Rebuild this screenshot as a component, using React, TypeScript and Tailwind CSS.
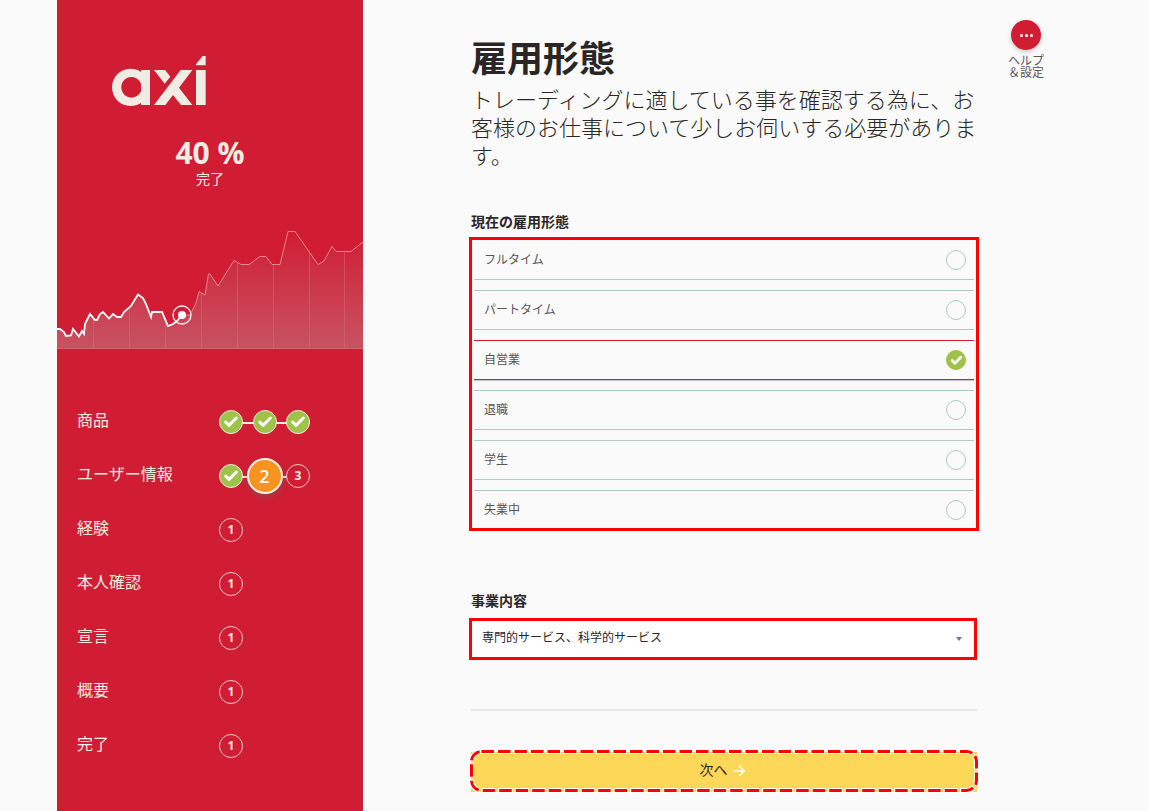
import React, { useState } from "react";
import { Check } from "lucide-react";

type StepState = "done" | "current" | "todo";

const sections: { label: string; steps: StepState[] }[] = [
  { label: "商品", steps: ["done", "done", "done"] },
  { label: "ユーザー情報", steps: ["done", "current", "todo"] },
  { label: "経験", steps: ["todo"] },
  { label: "本人確認", steps: ["todo"] },
  { label: "宣言", steps: ["todo"] },
  { label: "概要", steps: ["todo"] },
  { label: "完了", steps: ["todo"] },
];

const employmentTypes = ["フルタイム", "パートタイム", "自営業", "退職", "学生", "失業中"];

const pastLine =
  "0,109 3,109 7,112 9,116 14,115.5 16,109 22,116.5 25,111 27,114 28,104 33,94 38,100 40,100 43,94 46,92 52,98.5 56,94 60,97 64,97 67,92 74,86 81,74.5 86,78 89,84 94,97 95,92 105,92 111,106 116,104 120,101 125,95";
const futureLine =
  "125,95 133,95 139,83 142,71.5 148,75 151.5,54 153,54 161,66 177,40.5 184,44.5 192,44.5 203,36.5 209,36.5 215,44.5 223,44.5 231,11.5 238,11.5 253,33 261,44.5 267,41 275,26.5 279,31.5 294,31.5 306,22";
const gridLines = [36.5, 72.5, 108.5, 144.5, 180.5, 216.5, 252.5, 287.5];

function Logo() {
  return (
    <svg viewBox="186 48 282 150" className="h-[50px] w-[94px]" fill="#f0ebe3" role="img" aria-label="axi">
      <path
        fillRule="evenodd"
        d="M273 96V90H300V195H273V189C264 195 253 198 241 198C210 198 186 173 186 142C186 111 210 86 241 86C253 86 264 89 273 96ZM273 131C268 119 257 111 244 111C227 111 214 125 214 142C214 159 227 173 244 173C257 173 268 165 273 154Z"
      />
      <path d="M312 90H345L361 110L344 131Z" />
      <path d="M392 90H427L387 143L427 195H393L369 165L346 195H312Z" />
      <path d="M438 90H467V195H438ZM458 48H467V76H438V73Z" />
    </svg>
  );
}

function ProgressChart() {
  return (
    <svg viewBox="0 0 306 129" className="block w-full" aria-hidden="true">
      <defs>
        <linearGradient id="area" x1="0" y1="11" x2="0" y2="128" gradientUnits="userSpaceOnUse">
          <stop offset="0" stopColor="#bc9ca3" stopOpacity="0" />
          <stop offset="1" stopColor="#bc9ca3" stopOpacity="0.42" />
        </linearGradient>
        <clipPath id="under">
          <polygon points={`${pastLine} ${futureLine} 306,129 0,129`} />
        </clipPath>
      </defs>
      <polygon points={`${pastLine} ${futureLine} 306,129 0,129`} fill="url(#area)" />
      <g clipPath="url(#under)" stroke="#e0707e" strokeOpacity="0.45">
        {gridLines.map((x) => (
          <line key={x} x1={x} x2={x} y1="0" y2="129" />
        ))}
        <line x1="0" x2="306" y1="128.5" y2="128.5" />
      </g>
      <polyline points={futureLine} fill="none" stroke="#ec8e99" strokeWidth="0.9" />
      <polyline points={pastLine} fill="none" stroke="#fff" strokeWidth="1.8" />
      <circle cx="125" cy="95" r="9" fill="none" stroke="#fff" strokeWidth="1.3" />
      <circle cx="125" cy="95" r="4" fill="#fff" />
    </svg>
  );
}

function StepDot({ state, number }: { state: StepState; number: number }) {
  if (state === "done") {
    return (
      <span className="relative flex size-6 items-center justify-center rounded-full border border-[#f0ebe3] bg-[#9fc24a] text-white">
        <Check className="size-4" strokeWidth={4.5} />
      </span>
    );
  }
  if (state === "current") {
    return (
      <span className="relative flex size-9 items-center justify-center rounded-full border-2 border-[#fdf1e4] bg-[#f8931f] text-lg font-semibold text-white shadow-[0_3px_5px_rgba(110,90,100,0.6)]">
        {number}
      </span>
    );
  }
  return (
    <span className="relative flex size-6 items-center justify-center rounded-full border border-[#f0c8c8] bg-[#d01d33] text-xs font-bold text-[#f0ebe3]">
      {number}
    </span>
  );
}

function Sidebar() {
  return (
    <aside className="w-[306px] shrink-0 bg-[#d01d33] pt-14 pb-8 text-[#f0ebe3]">
      <div className="pl-[55px]">
        <Logo />
      </div>
      <p className="mt-[29px] text-center text-[30px] leading-9 font-bold">40 %</p>
      <p className="text-center text-sm leading-4">完了</p>
      <div className="mt-[33px]">
        <ProgressChart />
      </div>
      <ol className="mt-[46px] pl-5">
        {sections.map((section) => (
          <li key={section.label} className="flex h-[54px] items-center">
            <span className="w-[142px] pb-1 text-base leading-6">{section.label}</span>
            <span className="relative flex w-[91px] items-center justify-between">
              {section.steps.length > 1 && (
                <span className="absolute top-1/2 right-0 left-3 h-[2px] bg-[#f0ebe3]" />
              )}
              {section.steps.map((state, i) => (
                <StepDot key={i} state={state} number={i + 1} />
              ))}
            </span>
          </li>
        ))}
      </ol>
    </aside>
  );
}

export default function App() {
  const [employment, setEmployment] = useState("自営業");

  return (
    <div className="flex min-h-screen bg-[#fafafa] px-[57px] font-['Open_Sans','Noto_Sans_CJK_JP',sans-serif] text-[#2b2626]" lang="ja">
      <Sidebar />
      <main className="flex min-w-0 flex-1 items-start justify-between pr-12 pl-[108px]">
        <form className="w-full max-w-[506px] pt-[37px] pb-[19px]" onSubmit={(e) => e.preventDefault()}>
          <h1 className="text-4xl leading-[44px] font-bold">雇用形態</h1>
          <p className="mt-1 text-[22px] leading-7 font-light">
            トレーディングに適している事を確認する為に、お客様のお仕事について少しお伺いする必要があります。
          </p>

          <fieldset className="mt-[43px]">
            <legend className="text-sm leading-5 font-bold">現在の雇用形態</legend>
            <div className="-mx-[2px] mt-[5px] flex flex-col gap-[10px] border-3 border-[#ff0000] px-[2px]">
              {employmentTypes.map((type) => (
                <label
                  key={type}
                  className="flex h-10 items-start justify-between border-y border-[#a9cdc5] pt-[9px] pr-2 pl-[10px] text-xs leading-5 text-[#5a5555] first:border-t-transparent last:h-[38px] last:border-b-0 has-checked:border-[#d01d33] has-checked:shadow-[0_1px_1px_rgba(0,0,0,0.2)]"
                >
                  {type}
                  <span className="relative flex size-5 items-center justify-center">
                    <input
                      type="radio"
                      name="employment"
                      checked={employment === type}
                      onChange={() => setEmployment(type)}
                      className="size-5 appearance-none rounded-full border border-[#a9cdc5] checked:border-[#9fc24a] checked:bg-[#9fc24a]"
                    />
                    {employment === type && (
                      <Check className="pointer-events-none absolute size-[13px] text-white" strokeWidth={5} />
                    )}
                  </span>
                </label>
              ))}
            </div>
          </fieldset>

          <label htmlFor="industry" className="mt-[60px] block text-sm leading-5 font-bold">
            事業内容
          </label>
          <div className="relative mt-[7px] -ml-[2px]">
            <select
              id="industry"
              className="block h-[42px] w-full appearance-none border-3 border-[#ff0000] bg-white pr-8 pb-[3px] pl-[10px] text-xs text-[#2b2626]"
            >
              <option>専門的サービス、科学的サービス</option>
            </select>
            <svg viewBox="0 0 6 4" className="pointer-events-none absolute top-[19px] right-[15px] h-1 w-[6px]" fill="#6878a8" aria-hidden="true">
              <path d="M0 0H6L3 4Z" />
            </svg>
          </div>

          <hr className="mt-[49px] border-t-2 border-[#e9e9e9]" />

          <button
            type="submit"
            className="relative mt-[41px] flex h-10 w-full items-center justify-center gap-[5px] bg-[#fdd757] pr-1 pb-1 text-sm leading-5"
          >
            次へ
            <svg viewBox="0 0 12 12" className="size-3 translate-y-px" fill="none" stroke="#fff" strokeWidth="1.5" aria-hidden="true">
              <path d="M0.5 6H11M6.2 1L11.2 6L6.2 11" />
            </svg>
            <svg className="pointer-events-none absolute inset-0 size-full overflow-visible" fill="none" aria-hidden="true">
              <rect x="0.5" y="-0.5" rx="10" className="h-[39px] w-[calc(100%-1px)]" stroke="#fff" strokeWidth="5" strokeDasharray="14.5 2" strokeDashoffset="1" />
              <rect x="0.5" y="-0.5" rx="10" className="h-[39px] w-[calc(100%-1px)]" stroke="#ff0000" strokeWidth="3" strokeDasharray="12.5 4" />
            </svg>
          </button>
        </form>

        <button type="button" className="flex w-9 shrink-0 flex-col items-center pt-5 text-xs leading-3 text-[#5a5555]">
          <span className="mb-[5px] flex size-[30px] items-center justify-center gap-[2px] rounded-full bg-[#d01d33] shadow-[0_2px_5px_rgba(0,0,0,0.2)]">
            <span className="size-[3px] rounded-full bg-white" />
            <span className="size-[3px] rounded-full bg-white" />
            <span className="size-[3px] rounded-full bg-white" />
          </span>
          <span className="whitespace-nowrap">
            ヘルプ
            <br />
            ＆設定
          </span>
        </button>
      </main>
    </div>
  );
}
